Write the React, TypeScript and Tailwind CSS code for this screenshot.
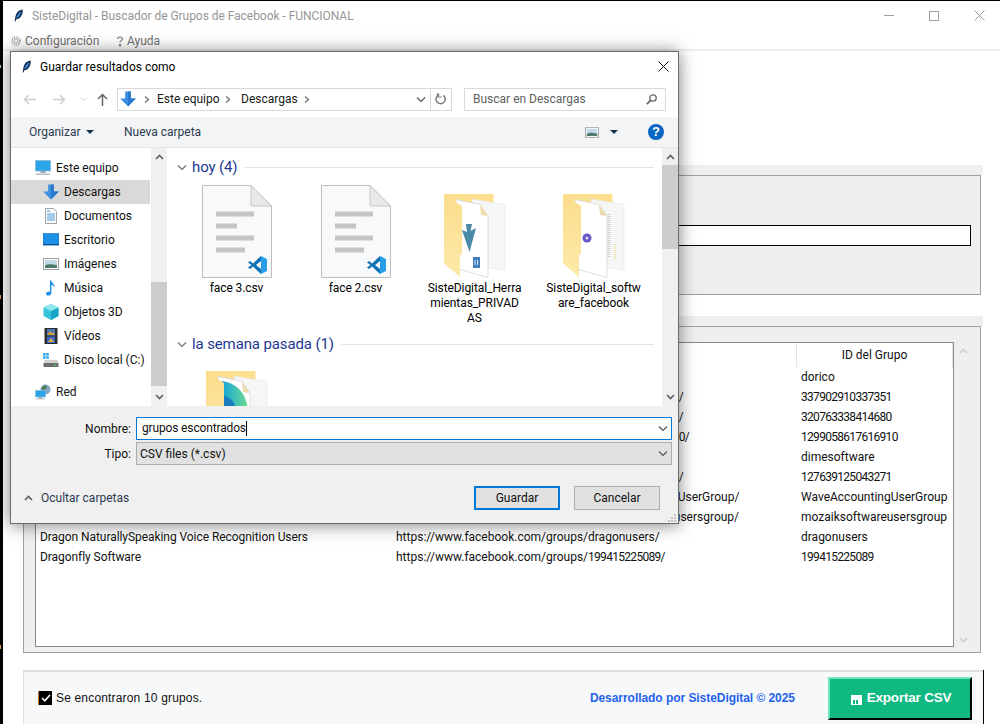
import React from "react";

const ui = { fontFamily: 'Roboto, "Noto Sans", sans-serif' };
const arial = { fontFamily: '"Liberation Sans", Arial, sans-serif' };

const Feather = ({ className = "" }: { className?: string }) => (
  <svg viewBox="0 0 12 16" className={className}>
    <path d="M.8 16 C1.6 13 1.4 9 3.2 5.5 C4.8 2.5 8 .5 11.6 0 C12 4 10.8 8 8.2 10.8 C6.6 12.4 5 13 3.2 13 L1.8 16 Z" fill="#10294a" />
    <path d="M2.8 11.5 C4 8 6.2 4.4 9.6 2 C9.4 5 8 8 5.6 10.2 Z" fill="#3f8fdc" />
  </svg>
);

const DownArrow = ({ className = "" }: { className?: string }) => (
  <svg viewBox="0 0 16 16" className={className}>
    <path d="M5.2 0.5 H10.8 V7.5 H15.8 L8 15.5 L.2 7.5 H5.2 Z" fill="#3a8fe0" />
    <path d="M8 0.5 H10.8 V7.5 H15.8 L8 15.5 Z" fill="#2a78cc" />
  </svg>
);

const Chev = ({ dir = "down", color = "#666", className = "" }: { dir?: string; color?: string; className?: string }) => {
  const d = dir === "down" ? "M1 1.5 L5 5.5 L9 1.5" : dir === "up" ? "M1 5.5 L5 1.5 L9 5.5" : "M2 0.5 L5.5 3.5 L2 6.5";
  return (
    <svg viewBox={dir === "right" ? "0 0 7 7" : "0 0 10 7"} className={className}>
      <path d={d} fill="none" stroke={color} strokeWidth={dir === "right" ? 1.4 : 1.2} />
    </svg>
  );
};

const BoldChev = ({ up = true, color = "#606060" }: { up?: boolean; color?: string }) => (
  <svg viewBox="0 0 9 6" className="w-[9px] h-[6px]">
    <path d={up ? "M1 5 L4.5 1.5 L8 5" : "M1 1 L4.5 4.5 L8 1"} fill="none" stroke={color} strokeWidth="1.7" />
  </svg>
);

const Monitor = () => (
  <svg viewBox="0 0 16 16" className="w-4 h-4 shrink-0">
    <rect x="0.5" y="0.5" width="15" height="10.5" fill="#2aa5ea" stroke="#8ab8d2" strokeWidth=".8" />
    <rect x="5.5" y="11" width="5" height="2" fill="#9aa8b2" />
    <rect x="1" y="13.5" width="14" height="1.5" fill="#b8bec4" />
  </svg>
);
const DocIcon = () => (
  <svg viewBox="0 0 16 16" className="w-4 h-4 shrink-0">
    <path d="M2.5 .5 H10.5 L13.5 3.5 V15.5 H2.5 Z" fill="#fafafa" stroke="#a5a5a5" />
    <path d="M4 3 h3 M4 6 h8 M4 8 h8 M4 10 h8 M4 12 h8" stroke="#4f9ad8" strokeWidth="1" />
  </svg>
);
const DesktopIcon = () => (
  <svg viewBox="0 0 16 16" className="w-4 h-4 shrink-0">
    <rect x="0" y="1.5" width="16" height="11.5" fill="#1e90e8" stroke="#0f6cb8" strokeWidth=".6" />
    <rect x="0" y="12" width="16" height="1.2" fill="#0e4f8c" />
  </svg>
);
const PicIcon = ({ className = "w-4 h-4 shrink-0" }: { className?: string }) => (
  <svg viewBox="0 0 16 12" className={className}>
    <rect x=".5" y=".5" width="15" height="11" fill="#fff" stroke="#a0a0a0" />
    <rect x="2" y="2" width="12" height="8" fill="#c2dbe8" />
    <path d="M2 7.5 C5 5.5 8 6 14 7.2 V10 H2 Z" fill="#4e7a6c" />
  </svg>
);
const MusicIcon = () => (
  <svg viewBox="0 0 16 16" className="w-4 h-4 shrink-0">
    <path d="M7 .5 H8.4 C8.8 3 12 4 11.6 7.6 C11 5.8 9.8 5.2 8.4 5 V13 C8.4 14.8 6.6 15.6 5.2 15.6 C3.8 15.6 3 14.8 3 13.8 C3 12.4 5 11.2 7 11.7 Z" fill="#1e90e8" />
  </svg>
);
const CubeIcon = () => (
  <svg viewBox="0 0 16 16" className="w-4 h-4 shrink-0">
    <path d="M8 0 L15.5 3.5 V12 L8 16 L.5 12 V3.5 Z" fill="#37c4d8" />
    <path d="M8 7 L15.5 3.5 V12 L8 16 Z" fill="#19a6c6" />
    <path d="M8 0 L15.5 3.5 L8 7 L.5 3.5 Z" fill="#8fe6ee" />
  </svg>
);
const FilmIcon = () => (
  <svg viewBox="0 0 16 16" className="w-4 h-4 shrink-0">
    <rect x="1.5" y="0" width="13" height="16" fill="#2c2c2c" />
    <rect x="4" y="1" width="8" height="6.5" fill="#4a78b8" />
    <rect x="4" y="8.5" width="8" height="6.5" fill="#3a68c8" />
    <path d="M4 7 L7 3 L9 5.5 L10 4 L12 7 Z" fill="#d8a030" />
    <path d="M5 14 L8 10 L11 14 Z" fill="#e0b040" />
  </svg>
);
const DriveIcon = () => (
  <svg viewBox="0 0 16 16" className="w-4 h-4 shrink-0">
    <rect x="0" y="1" width="2.6" height="2.6" fill="#35a8ee" />
    <rect x="3.2" y="1" width="2.6" height="2.6" fill="#35a8ee" />
    <rect x="0" y="4.2" width="2.6" height="2.6" fill="#35a8ee" />
    <rect x="3.2" y="4.2" width="2.6" height="2.6" fill="#35a8ee" />
    <path d="M1.5 8 H14.5 L15.5 11 H.5 Z" fill="#d2d2d2" />
    <rect x=".5" y="11" width="15" height="4" fill="#6e6e6e" />
    <rect x="11" y="12.5" width="2" height="1.2" fill="#3fd24a" />
  </svg>
);
const NetIcon = () => (
  <svg viewBox="0 0 16 16" className="w-4 h-4 shrink-0">
    <circle cx="10.5" cy="5.5" r="5" fill="#7fa9c8" />
    <path d="M6 4 C8 3 9 1.5 10 1 C12 2 12 4 10.5 5 C9 6 7 6 6 4 Z" fill="#4f7f52" />
    <rect x=".5" y="6.5" width="10" height="6.5" fill="#2aa5ea" stroke="#8ab8d2" strokeWidth=".6" />
    <rect x="4" y="13" width="3" height="1.2" fill="#9aa8b2" />
    <rect x="1.5" y="14.2" width="8" height="1.2" fill="#b8bec4" />
  </svg>
);

const CsvFile = () => (
  <svg viewBox="0 0 70 93" className="w-[70px] h-[93px]">
    <path d="M.5 .5 H49 L69.5 21 V92.5 H.5 Z" fill="#f8f9fa" stroke="#bdbdbd" />
    <path d="M49 .5 V21 H69.5 Z" fill="#e9e9e9" stroke="#c8c8c8" />
    <rect x="14" y="26.5" width="38" height="5" fill="#c4c4c4" />
    <rect x="14" y="38.5" width="21" height="5" fill="#c4c4c4" />
    <rect x="14" y="50.5" width="38" height="5" fill="#c4c4c4" />
    <rect x="14" y="62.5" width="29" height="5" fill="#c4c4c4" />
    <g transform="translate(46 71)">
      <path d="M13 0 L19 3 V15 L13 18 Z" fill="#2a9de8" />
      <path d="M13 0 L5 7.5 L2 5 L0 6.5 L3.5 9 L0 11.5 L2 13 L5 10.5 L13 18 V13 L8 9 L13 5 Z" fill="#0f72b6" />
    </g>
  </svg>
);

const FolderArt = ({ kind }: { kind: "down" | "purple" | "gradient" }) => (
  <svg viewBox="0 0 62 84" className="w-[62px] h-[84px]">
    <defs>
      <linearGradient id={`fy${kind}`} x1="0" y1="0" x2="0" y2="1">
        <stop offset="0" stopColor="#fbdc8c" />
        <stop offset="1" stopColor="#fdeaa9" />
      </linearGradient>
      <linearGradient id={`gd${kind}`} x1="0" y1="0" x2="1" y2="0">
        <stop offset="0" stopColor="#12a5d8" />
        <stop offset="1" stopColor="#6fdc92" />
      </linearGradient>
    </defs>
    <path d="M0 0 H49.5 V14 H0 Z" fill="#fde08f" />
    <path d="M28 5 L61 10.5 V76 L34 72 Z" fill="#f6f6f6" stroke="#e6e6e6" strokeWidth=".6" />
    <path d="M12 5.5 L36 10.5 L44 22 V83.5 L14 75 Z" fill="#ffffff" stroke="#d6d6d6" strokeWidth=".8" />
    <path d="M36 10.5 L44 22 L37 21 Z" fill="#ecdcae" />
    {kind === "down" && (
      <g>
        <path d="M22 30 H28 L26.5 37 L32 34 L25.5 58 L18 36 L23 38 Z" fill="#4a89a8" />
        <rect x="29" y="63" width="7" height="11" fill="#3f7fc0" />
        <path d="M31 66 v5 M33.5 66 v5" stroke="#fff" strokeWidth=".8" />
      </g>
    )}
    {kind === "purple" && (
      <g>
        <circle cx="24" cy="44" r="4.5" fill="#6a55c4" />
        <circle cx="24" cy="44" r="1.6" fill="#d8d2f0" />
        <path d="M46 20 V64" stroke="#cfcfcf" strokeWidth="3" strokeDasharray="1 1" />
        <path d="M52 50 V66" stroke="#efe3a8" strokeWidth="1" />
      </g>
    )}
    {kind === "gradient" && (
      <g>
        <path d="M16 10 C30 12 41 22 42 40 H16 Z" fill="url(#gdgradient)" />
        <path d="M16 24 C24 26 29 30 30 40 H16 Z" fill="#1c7cc0" />
      </g>
    )}
    <path d="M0 1 L18 12 V60 L16 61 V83 L0 69.5 Z" fill={`url(#fy${kind})`} />
  </svg>
);

const GroupHeader = ({ label }: { label: string }) => (
  <div className="flex items-center h-5 pl-[10px] pr-[8px]">
    <Chev color="#707070" className="w-[10px] h-[7px] shrink-0" />
    <span className="ml-[5px] text-[15px] leading-5 tracking-[-0.12px] text-[#1e3a8f] whitespace-nowrap">{label}</span>
    <span className="ml-[7px] flex-1 h-px bg-[#e5e5e5]" />
  </div>
);

const Item = ({ label, children, top = "" }: { label: string[]; children: React.ReactNode; top?: string }) => (
  <div className="w-[119px] h-[149px] shrink-0 flex flex-col items-center">
    <div className={`h-[96px] flex justify-center ${top}`}>{children}</div>
    <div className="text-[12px] leading-[15px] tracking-[-0.08px] text-center text-black whitespace-nowrap">
      {label.map((l) => (
        <div key={l}>{l}</div>
      ))}
    </div>
  </div>
);

const sideItems: [string, React.ReactNode][] = [
  ["Documentos", <DocIcon />],
  ["Escritorio", <DesktopIcon />],
  ["Imágenes", <PicIcon />],
  ["Música", <MusicIcon />],
  ["Objetos 3D", <CubeIcon />],
  ["Vídeos", <FilmIcon />],
  ["Disco local (C:)", <DriveIcon />],
];

const rows: [string, string, string][] = [
  ["", "https://www.facebook.com/groups/dorico/", "dorico"],
  ["", "https://www.facebook.com/groups/337902910337351/", "337902910337351"],
  ["", "https://www.facebook.com/groups/320763338414680/", "320763338414680"],
  ["", "https://www.facebook.com/groups/1299058617616910/", "1299058617616910"],
  ["", "https://www.facebook.com/groups/dimesoftware/", "dimesoftware"],
  ["", "https://www.facebook.com/groups/127639125043271/", "127639125043271"],
  ["", "https://www.facebook.com/groups/WaveAccountingUserGroup/", "WaveAccountingUserGroup"],
  ["", "https://www.facebook.com/groups/mozaiksoftwareusersgroup/", "mozaiksoftwareusersgroup"],
  ["Dragon NaturallySpeaking Voice Recognition Users", "https://www.facebook.com/groups/dragonusers/", "dragonusers"],
  ["Dragonfly Software", "https://www.facebook.com/groups/199415225089/", "199415225089"],
];

// Roboto's digits are wider than the reference's, so runs of digits get tightened.
const Cell = ({ text }: { text: string }) => (
  <>
    {text.split(/(\d+)/).map((part, i) =>
      i % 2 === 1 ? (
        <span key={i} className="tracking-[-0.7px]">
          {part}
        </span>
      ) : (
        <span key={i}>{part}</span>
      )
    )}
  </>
);

function Dialog() {
  return (
    <div
      style={ui}
      className="absolute left-[10px] top-[51px] w-[669px] h-[473px] z-10 flex flex-col bg-white border border-[#6b6b6b] shadow-[0_1px_16px_rgba(0,0,0,0.5)] text-[12px] text-black"
    >
      {/* title */}
      <div className="h-[29px] flex items-center pl-[11px] pr-[9px] shrink-0">
        <Feather className="w-[9px] h-[15px]" />
        <span className="ml-[9px] leading-4">Guardar resultados como</span>
        <svg viewBox="0 0 11 11" className="ml-auto w-[11px] h-[11px]">
          <path d="M.5 .5 L10.5 10.5 M10.5 .5 L.5 10.5" stroke="#111" strokeWidth="1" />
        </svg>
      </div>
      {/* nav */}
      <div className="h-[36px] flex items-center shrink-0 pl-[12px]">
        <svg viewBox="0 0 13 11" className="w-[13px] h-[11px]">
          <path d="M13 5.5 H1.5 M6 1 L1.5 5.5 L6 10" fill="none" stroke="#cfcfcf" strokeWidth="1.5" />
        </svg>
        <svg viewBox="0 0 13 11" className="ml-[17px] w-[13px] h-[11px]">
          <path d="M0 5.5 H11.5 M7 1 L11.5 5.5 L7 10" fill="none" stroke="#cfcfcf" strokeWidth="1.5" />
        </svg>
        <svg viewBox="0 0 7 5" className="ml-[14px] w-[7px] h-[5px]">
          <path d="M.5 .5 L3.5 3.5 L6.5 .5" fill="none" stroke="#cfcfcf" />
        </svg>
        <svg viewBox="0 0 11 13" className="ml-[10px] w-[11px] h-[13px]">
          <path d="M5.5 13 V1.5 M1 6 L5.5 1.5 L10 6" fill="none" stroke="#666" strokeWidth="1.5" />
        </svg>
        <div className="ml-[9px] w-[335px] h-[23px] border border-[#d9d9d9] flex items-center pl-[2px]">
          <DownArrow className="w-4 h-4 shrink-0" />
          <Chev dir="right" color="#777" className="ml-[7px] w-[7px] h-[7px]" />
          <span className="ml-[7px] text-[#1a1a1a] w-[61px] whitespace-nowrap">Este equipo</span>
          <Chev dir="right" color="#777" className="ml-[6px] w-[7px] h-[7px]" />
          <span className="ml-[10px] text-[#1a1a1a] w-[54px] whitespace-nowrap">Descargas</span>
          <Chev dir="right" color="#777" className="ml-[8px] w-[7px] h-[7px]" />
          <Chev color="#555" className="ml-auto w-[10px] h-[7px]" />
          <div className="ml-[4px] w-px h-[21px] bg-[#d9d9d9]" />
          <svg viewBox="0 0 12 12" className="ml-[4px] mr-[4px] w-[12px] h-[12px]">
            <path d="M3 2.5 A4.6 4.6 0 1 0 7 1.8" fill="none" stroke="#777" strokeWidth="1.4" transform="rotate(20 6 6)" />
            <path d="M3.2 0 V4 H7" fill="none" stroke="#777" strokeWidth="1.2" transform="translate(-0.5 0)" />
          </svg>
        </div>
        <div className="ml-[12px] w-[202px] h-[23px] border border-[#d9d9d9] flex items-center pl-[8px] pr-[8px] text-[#5f5f5f]">
          Buscar en Descargas
          <svg viewBox="0 0 11 11" className="ml-auto w-[11px] h-[11px]">
            <circle cx="7" cy="4" r="3.2" fill="none" stroke="#666" strokeWidth="1.3" />
            <path d="M4.6 6.4 L.8 10.2" stroke="#666" strokeWidth="1.8" />
          </svg>
        </div>
      </div>
      {/* toolbar */}
      <div className="h-[31px] shrink-0 bg-[#f3f4f6] border-b border-[#e6e6e6] flex items-center pl-[18px] pr-[14px]">
        <span className="text-[#2d3a50] w-[52px]">Organizar</span>
        <span className="ml-[5px] w-0 h-0 border-x-[4px] border-x-transparent border-t-[4px] border-t-[#1a2f50]" />
        <span className="ml-[30px] text-[#2d3a50]">Nueva carpeta</span>
        <PicIcon className="ml-auto w-[14px] h-[11px]" />
        <span className="ml-[11px] w-0 h-0 border-x-[4px] border-x-transparent border-t-[4px] border-t-[#1a2f50]" />
        <span style={arial} className="ml-[30px] w-4 h-4 rounded-full bg-[#0a66c2] text-white text-[13px] font-bold leading-4 text-center">?</span>
      </div>
      {/* browser */}
      <div className="h-[258px] shrink-0 flex">
        <div className="w-[139px] pt-2 text-[#111]">
          <div className="h-6 flex items-center pl-[24px] gap-[5px]">
            <Monitor />
            <span>Este equipo</span>
          </div>
          <div className="h-6 flex items-center pl-[32px] gap-[5px] bg-[#d9d9d9]">
            <DownArrow className="w-4 h-4 shrink-0" />
            <span>Descargas</span>
          </div>
          {sideItems.map(([l, ic]) => (
            <div key={l} className="h-6 flex items-center pl-[32px] gap-[5px]">
              {ic}
              <span className="whitespace-nowrap">{l}</span>
            </div>
          ))}
          <div className="mt-2 h-6 flex items-center pl-[24px] gap-[5px]">
            <NetIcon />
            <span>Red</span>
          </div>
        </div>
        <div className="w-[16px] bg-[#f0f0f0] flex flex-col items-center pt-[6px] pb-[6px] ml-px">
          <BoldChev />
          <div className="mt-[122px] w-full h-[104px] bg-[#cdcdcd]" />
          <div className="mt-auto">
            <BoldChev up={false} />
          </div>
        </div>
        <div className="flex-1 overflow-hidden pt-[9px] h-[258px]">
          <GroupHeader label="hoy (4)" />
          <div className="flex pl-[10px] mt-2">
            <Item label={["face 3.csv"]}>
              <CsvFile />
            </Item>
            <Item label={["face 2.csv"]}>
              <CsvFile />
            </Item>
            <Item label={["SisteDigital_Herra", "mientas_PRIVAD", "AS"]} top="pt-[9px]">
              <FolderArt kind="down" />
            </Item>
            <Item label={["SisteDigital_softw", "are_facebook"]} top="pt-[9px]">
              <FolderArt kind="purple" />
            </Item>
          </div>
          <GroupHeader label="la semana pasada (1)" />
          <div className="flex pl-[10px] mt-2">
            <div className="w-[119px] flex justify-center pt-[9px]">
              <FolderArt kind="gradient" />
            </div>
          </div>
        </div>
        <div className="w-[16px] bg-[#f0f0f0] flex flex-col items-center pt-[6px] pb-[6px]">
          <BoldChev />
          <div className="mt-[5px] w-full h-[84px] bg-[#cdcdcd]" />
          <div className="mt-auto">
            <BoldChev up={false} />
          </div>
        </div>
      </div>
      {/* form */}
      <div className="flex-1 bg-[#f0f0f0] flex flex-col pt-[11px] pl-[125px] pr-[6px] relative">
        <div className="flex items-center h-[23px]">
          <span className="w-[120px] -ml-[125px] text-right text-[#111]">Nombre:</span>
          <div className="ml-[5px] flex-1 h-[23px] border border-[#0078d7] bg-white flex items-center pl-[5px] pr-[3px]">
            <span className="border-r border-black leading-[15px] tracking-[-0.15px] text-[#111] whitespace-nowrap">grupos escontrados</span>
            <Chev color="#555" className="ml-auto w-[10px] h-[7px]" />
          </div>
        </div>
        <div className="flex items-center h-[23px] mt-[2px]">
          <span className="w-[120px] -ml-[125px] text-right text-[#111]">Tipo:</span>
          <div className="ml-[5px] flex-1 h-[23px] border border-[#adadad] bg-[#e1e1e1] flex items-center pl-[3px] pr-[3px]">
            <span className="text-[#111]">CSV files (*.csv)</span>
            <Chev color="#555" className="ml-auto w-[10px] h-[7px]" />
          </div>
        </div>
        <div className="flex items-center -ml-[112px] mt-[21px] pr-[6px]">
          <div className="flex items-center w-[450px]">
            <BoldChev />
            <span className="ml-[8px] text-[#2d3a50] whitespace-nowrap">Ocultar carpetas</span>
          </div>
          <div className="w-[86px] h-[24px] shrink-0 border-2 border-[#0078d7] bg-[#e1e1e1] flex items-center justify-center text-[#111]">Guardar</div>
          <div className="ml-[14px] w-[86px] h-[24px] shrink-0 border border-[#adadad] bg-[#e1e1e1] flex items-center justify-center text-[#111]">Cancelar</div>
        </div>
        <svg viewBox="0 0 9 9" className="absolute right-[2px] bottom-[1px] w-[9px] h-[9px]">
          <path d="M7 1h2v2H7z M4 4h2v2H4z M7 4h2v2H7z M1 7h2v2H1z M4 7h2v2H4z M7 7h2v2H7z" fill="#c4c4c4" />
        </svg>
      </div>
    </div>
  );
}

export default function App() {
  return (
    <div className="relative w-[1000px] h-[724px] overflow-hidden bg-black pl-[3px] pt-px">
      <div className="relative h-full bg-white flex flex-col" style={ui}>
        {/* Title bar */}
        <div className="h-[29px] shrink-0 flex items-center pl-[11px]">
          <Feather className="w-[9px] h-[15px]" />
          <span className="ml-[9px] text-[12px] tracking-[-0.04px] text-[#969696] whitespace-nowrap">SisteDigital - Buscador de Grupos de Facebook - FUNCIONAL</span>
          <div className="ml-auto flex items-center pr-[15px]">
            <span className="w-[10px] h-px bg-[#a0a0a0]" />
            <span className="ml-[35px] w-[10px] h-[10px] border border-[#a0a0a0]" />
            <svg viewBox="0 0 11 11" className="ml-[35px] w-[11px] h-[11px]">
              <path d="M.5 .5 L10.5 10.5 M10.5 .5 L.5 10.5" stroke="#a0a0a0" strokeWidth="1" />
            </svg>
          </div>
        </div>
        {/* Menu */}
        <div className="h-[16px] pt-[3px] shrink-0 flex items-center pl-[8px] text-[12px] text-[#707070] border-b-2 border-[#f0f0f0] box-content">
          <svg viewBox="0 0 10 10" className="w-[10px] h-[10px]">
            <circle cx="5" cy="5" r="2" fill="none" stroke="#8a8a8a" strokeWidth=".8" />
            <circle cx="5" cy="5" r="4" fill="none" stroke="#8a8a8a" strokeWidth="1.2" strokeDasharray="1.4 .9" />
          </svg>
          <span className="ml-[4px] w-[76px] whitespace-nowrap">Configuración</span>
          <svg viewBox="0 0 8 11" className="ml-[15px] w-[8px] h-[11px]">
            <path d="M1.5 3 C1.5 0.4 6.5 0.4 6.5 3 C6.5 4.6 4 4.6 4 6.5" fill="none" stroke="#8a8a8a" strokeWidth="1.2" />
            <rect x="3" y="8" width="2" height="2.5" fill="#8a8a8a" />
          </svg>
          <span className="ml-[3px]">Ayuda</span>
        </div>

        {/* Panels */}
        <div className="flex-1 flex flex-col pl-[20px] pr-[17px] pt-[114px] min-h-0">
          <div className="w-[960px]">
            <div className="h-[10px] bg-[#efefef]" />
            <div className="w-[958px] h-[120px] bg-[#efefef] border border-[#a0a0a0] pt-[49px] pl-[12px] pr-[9px]">
              <div className="h-[21px] bg-white border border-black" />
            </div>
          </div>

          <div className="w-[960px] mt-[21px]">
            <div className="h-[10px] bg-[#efefef]" />
            <div className="w-[958px] h-[327px] bg-[#efefef] border border-[#a0a0a0] pt-[15px] pl-[11px] flex">
              <div className="w-[919px] h-[305px] bg-white border border-[#8a8a8a] text-[12px] text-[#111] overflow-hidden">
                <div className="h-[24px] grid grid-cols-[356px_405px_1fr]">
                  <div />
                  <div className="border-r border-[#e3e3e3]" />
                  <div className="flex items-center justify-center border-r border-[#e3e3e3]">ID del Grupo</div>
                </div>
                {rows.map((r) => (
                  <div key={r[2]} className="h-5 leading-5 grid grid-cols-[356px_405px_1fr] whitespace-nowrap">
                    <div className="pl-[4px] overflow-hidden tracking-[-0.06px]">{r[0]}</div>
                    <div className="pl-[4px] overflow-hidden"><Cell text={r[1]} /></div>
                    <div className="pl-[4px] overflow-hidden"><Cell text={r[2]} /></div>
                  </div>
                ))}
              </div>
              <div className="w-[18px] h-[305px] flex flex-col items-center pt-[6px] pb-[4px]">
                <BoldChev color="#cfcfcf" />
                <div className="mt-auto">
                  <BoldChev up={false} color="#cfcfcf" />
                </div>
              </div>
            </div>
          </div>

          {/* Footer */}
          <div className="w-[960px] mt-[17px] flex-1 bg-[#f7f8fa] border-t-2 border-l border-[#e0e0e0] flex items-center pl-[14px] pr-[11px] relative" style={arial}>
            <span className="w-[14px] h-[14px] bg-black flex items-center justify-center border-l border-[#c86a1a] shrink-0">
              <svg viewBox="0 0 10 8" className="w-[10px] h-[8px]">
                <path d="M1 4 L3.8 6.8 L9 1" fill="none" stroke="#fff" strokeWidth="1.6" />
              </svg>
            </span>
            <span className="ml-[4px] text-[12px] tracking-[0.17px] text-[#111]">Se encontraron 10 grupos.</span>
            <span className="ml-auto text-[12px] font-bold tracking-[-0.05px] text-[#2563eb]">Desarrollado por SisteDigital © 2025</span>
            <button className="ml-[33px] w-[144px] h-[43px] bg-[#10b981] border-2 border-t-[#6ee7b7] border-l-[#6ee7b7] border-r-black border-b-black flex items-center justify-center text-white text-[13.5px] font-bold tracking-[-0.2px] pt-px pl-[2px]">
              <svg viewBox="0 0 11 10" className="w-[11px] h-[10px] mr-[5px] mt-[3px]">
                <path d="M0 0 H11 V10 H0 Z M2 5 V9 H4 V5 Z M5 5 V9 H7 V5 Z" fill="#fff" fillRule="evenodd" />
              </svg>
              Exportar CSV
            </button>
            <span className="absolute -right-px -top-[2px] bottom-0 w-px bg-black" />
          </div>
        </div>
      </div>
      <Dialog />
      <span className="absolute left-0 top-[65px] w-[1px] h-[3px] bg-[#9fc4e0]" />
      <span className="absolute left-0 top-[295px] w-[1px] h-[4px] bg-[#d9a040]" />
      <span className="absolute left-0 top-[645px] w-[1px] h-[4px] bg-[#d9a040]" />
    </div>
  );
}
